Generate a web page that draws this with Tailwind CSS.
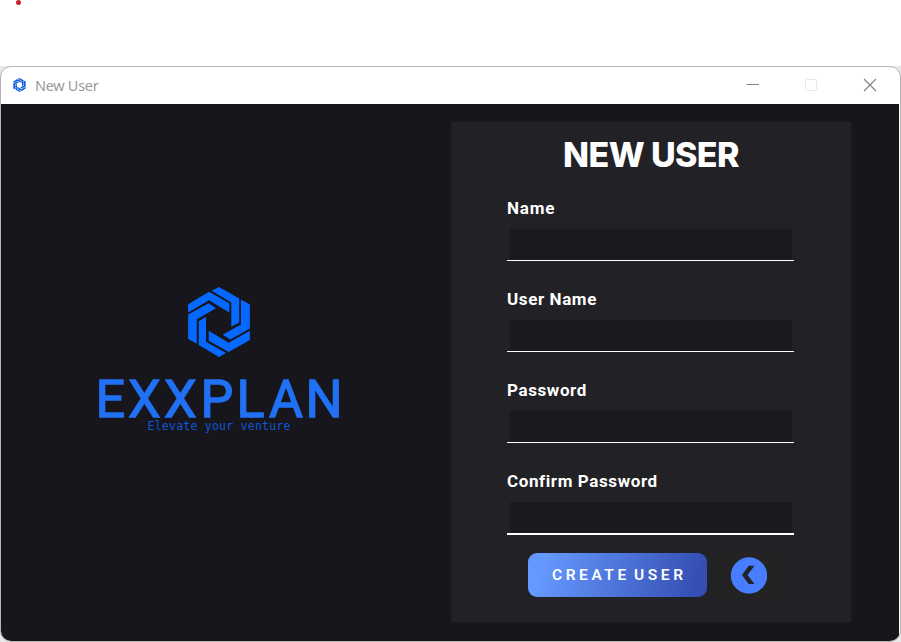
<!DOCTYPE html>
<html lang="en">
<head>
<meta charset="utf-8">
<title>New User</title>
<script src="https://cdn.jsdelivr.net/npm/@tailwindcss/browser@4"></script>
</head>
<body class="h-[642px] w-[901px] overflow-hidden bg-white pt-[66px] font-['Roboto',sans-serif] relative">
<svg width="0" height="0" class="absolute">
  <symbol id="mark" viewBox="54 35 186 211">
    <path d="M54 87 117 49 178 84V112L117 75 54 112Z"/>
    <path d="M125 46 147 35 208 70V142L184 155V82Z"/>
    <path d="M213 73 240 88V160L181 193 158 179 213 148Z"/>
    <path d="M240 167V195L176 231 116 197V167L176 203Z"/>
    <path d="M86 138 108 125V200L168 234 147 246 86 210Z"/>
    <path d="M54 118 116 84 138 99 80 132V206L54 192Z"/>
  </symbol>
</svg>
<div class="absolute left-[16px] top-0 size-[5px] rounded-full bg-[#c8202f]"></div>
<div class="bg-[#e8e8e8] h-[576px]">
<div class="flex h-[576px] flex-col overflow-hidden rounded-[11px] border border-[#b4b4b4] bg-white">
  <header class="flex h-[37px] shrink-0 items-center pl-[12px]">
    <svg class="-mt-px h-[14px] w-[13px] fill-[#0b5cdf]"><use href="#mark"/></svg>
    <span class="ml-[9px] font-['Noto_Sans',sans-serif] text-[14.5px] font-normal leading-none tracking-[-0.3px] text-[#9a9a9a]">New User</span>
    <svg class="-mt-[2px] ml-auto mr-[23px]" width="131" height="14" fill="none">
      <path d="M.5 6.500H13" stroke="#858585"/>
      <rect x="59.500" y="1.500" width="11" height="11" rx="1.500" stroke="#e8e8e8"/>
      <path d="m118 1 12 12m0-12-12 12" stroke="#858585" stroke-width="1.200"/>
    </svg>
  </header>
  <main class="mr-px flex flex-1 bg-[#17161c]">
    <section class="flex w-[450px] flex-col pl-[97px] pt-[183px]">
      <svg class="ml-[90px] h-[70px] w-[62px] fill-[#0568ff]"><use href="#mark"/></svg>
      <svg class="mt-[18px] overflow-visible" width="244" height="60">
        <text x="-2.500 30 66 102.500 138.500 171 207.500" y="41.500" fill="#2171f5" stroke="#2171f5" stroke-width="1.300" font-family="Roboto, sans-serif" font-size="52" font-weight="400">EXXPLAN</text>
        <text x="49.500" y="54.500" fill="#0c58d8" font-family="'DejaVu Sans Mono', monospace" font-size="11.500" textLength="143">Elevate your venture</text>
      </svg>
    </section>
    <section class="mt-[18px] flex h-[500px] w-[400px] flex-col bg-[#222126] px-14 text-white">
      <h1 class="mt-[16px] h-[34px] whitespace-nowrap text-center font-['Inter',sans-serif] text-[34px] font-extrabold leading-[34px] tracking-[-0.6px]">NEW USER</h1>
      <form class="mt-[26px] text-[17px] font-bold leading-5 tracking-[0.6px]">
        <label class="block h-[91px]"><span class="tracking-[0.85px]">Name</span><input class="mx-[3px] mt-[11px] block h-[31px] w-[282px] bg-[#1a191e] outline-none"><span class="block h-px w-[287px] bg-white"></span></label>
        <label class="block h-[91px]">User Name<input class="mx-[3px] mt-[11px] block h-[31px] w-[282px] bg-[#1a191e] outline-none"><span class="block h-px w-[287px] bg-white"></span></label>
        <label class="block h-[91px]">Password<input type="password" class="mx-[3px] mt-[11px] block h-[31px] w-[282px] bg-[#1a191e] outline-none"><span class="block h-px w-[287px] bg-white"></span></label>
        <label class="block h-[82px]">Confirm Password<input type="password" class="mx-[3px] mt-[11px] block h-[31px] w-[282px] bg-[#1a191e] outline-none"><span class="block h-0.5 w-[287px] bg-white"></span></label>
        <div class="flex pl-[21px]">
          <button type="button" class="flex h-11 w-[179px] items-center justify-center whitespace-nowrap rounded-[9px] bg-linear-[105deg,#6699ff_8%,#344eb3_94%]">
            <svg width="135" height="20"><text x="2" y="14.500" fill="#fff" font-family="Roboto, sans-serif" font-size="15.500" font-weight="600" letter-spacing="0" textLength="131" style="word-spacing:-3px">CREATE USER</text></svg>
          </button>
          <button type="button" aria-label="Back" class="ml-[7px] flex h-11 w-[68px] items-center justify-center bg-[#232323]">
            <svg width="38" height="38"><circle cx="20" cy="19.500" r="18.200" fill="#487dff"/><path d="M19.700 9.700H25.500L18.500 19 25.500 28H19.700L13 19Z" fill="#222327"/></svg>
          </button>
        </div>
      </form>
    </section>
  </main>
</div>
</div>
</body>
</html>
